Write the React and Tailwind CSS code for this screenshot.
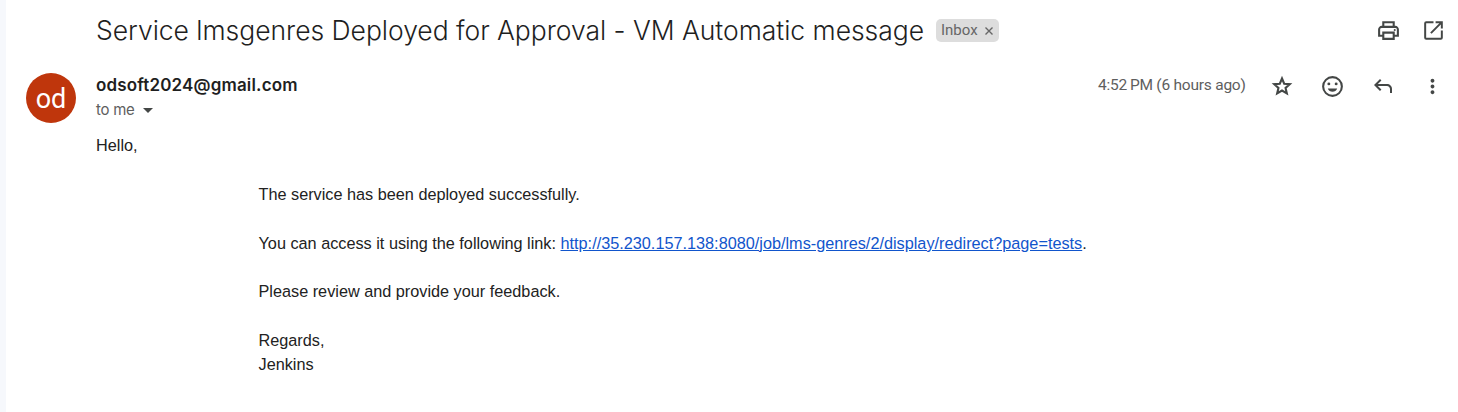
import { MdMoreVert } from "react-icons/md";

function PrintIcon() {
  return (
    <svg viewBox="0 0 24 24" className="size-[25px]" fill="none" stroke="currentColor" strokeWidth="2">
      <path d="M7 8V4h10v4" />
      <path d="M7 17H3v-6a2.500 2.500 0 0 1 2.500-2.500h13A2.500 2.500 0 0 1 21 11v6h-4" />
      <path d="M7 14h10v6H7z" />
      <circle cx="18" cy="11.500" r="1" fill="currentColor" stroke="none" />
    </svg>
  );
}

function NewWindowIcon() {
  return (
    <svg viewBox="0 0 24 24" className="size-[25px]" fill="none" stroke="currentColor" strokeWidth="1.900">
      <path d="M12 4H5a1 1 0 0 0-1 1v14a1 1 0 0 0 1 1h14a1 1 0 0 0 1-1v-7" />
      <path d="M14 4h6v6M20 4L9.500 14.500" />
    </svg>
  );
}

function StarIcon() {
  return (
    <svg viewBox="0 0 24 24" className="size-[24px]" fill="none" stroke="currentColor" strokeWidth="2.100">
      <path d="M12 4.500l2.200 5.200 5.600.5-4.250 3.700 1.280 5.500L12 16.500l-4.830 2.900 1.280-5.500L4.200 10.200l5.600-.5z" />
    </svg>
  );
}

function SmileIcon() {
  return (
    <svg viewBox="0 0 24 24" className="size-[25px]" fill="none" stroke="currentColor" strokeWidth="2">
      <circle cx="12" cy="12" r="9" />
      <circle cx="8.500" cy="9.500" r="1.400" fill="currentColor" stroke="none" />
      <circle cx="15.500" cy="9.500" r="1.400" fill="currentColor" stroke="none" />
      <path d="M7.500 13.800h9c-.8 2-2.500 3.200-4.500 3.200s-3.700-1.200-4.500-3.200z" fill="currentColor" stroke="none" />
    </svg>
  );
}

function ReplyIcon() {
  return (
    <svg viewBox="0 0 24 24" className="ml-px size-[24px]" fill="currentColor">
      <path d="M19 19v-4c0-.83-.29-1.540-.875-2.125S16.830 12 16 12H6.825l3.600 3.600L9 17l-6-6 6-6 1.425 1.400-3.600 3.600H16c1.383 0 2.563.488 3.538 1.463S21 13.617 21 15v4h-2z" />
    </svg>
  );
}

function IconButton({ label, children }) {
  return (
    <button aria-label={label} className="flex size-[26px] items-center justify-center">
      {children}
    </button>
  );
}

export default function App() {
  return (
    <div className="flex h-[412px] w-[1458px] overflow-hidden bg-[#f6f8fc] pl-1.5 font-['Liberation_Sans',sans-serif] text-[#222222]">
      <main className="flex flex-1 flex-col bg-white pl-5">
        <header className="flex h-[61px] items-center pl-[70px]">
          <h1 className="w-[840px] pb-0.5 whitespace-nowrap font-['Inter',sans-serif] text-[26.5px] leading-9 font-[350] tracking-[-0.03px] text-[#1f1f1f]">
            Service lmsgenres Deployed for Approval - VM Automatic message
          </h1>
          <span className="flex h-[23px] w-[63px] items-center rounded-[5px] bg-[#dddddd] pl-[5px] font-['Roboto',sans-serif] text-[15px] text-[#666666]">
            Inbox
            <svg viewBox="0 0 8 8" className="ml-[7px] size-2" stroke="currentColor" strokeWidth="1.400">
              <path d="M.5.5l7 7M7.500.5l-7 7" />
            </svg>
          </span>
          <div className="ml-auto flex gap-[19px] pr-3 text-[#444746]">
            <IconButton label="Print all"><PrintIcon /></IconButton>
            <IconButton label="In new window"><NewWindowIcon /></IconButton>
          </div>
        </header>

        <section className="flex pt-3">
          <div className="flex size-[50px] items-center justify-center rounded-full bg-[#bf360c] pt-0.5 font-['Roboto',sans-serif] text-[27px] font-[450] text-white">
            od
          </div>
          <div className="ml-5 font-['Inter',sans-serif]">
            <p className="h-[25px] whitespace-nowrap text-[17px] leading-6 font-semibold tracking-[0.15px] text-[#1f1f1f]">odsoft2024@gmail.com</p>
            <p className="flex h-6 items-center text-[15px] tracking-[-0.25px] text-[#5e5e5e]">
              to me
              <svg viewBox="0 0 10 5" className="ml-2 h-[5px] w-[10px]" fill="#444746"><path d="M0 0h10L5 5z" /></svg>
            </p>
          </div>
          <div className="ml-auto flex h-[26px] items-center pr-[13px] text-[#5e5e5e]">
            <time className="w-[171px] whitespace-nowrap font-['Roboto',sans-serif] text-[15.5px] tracking-[-0.23px]">4:52&#8201;PM (6 hours ago)</time>
            <div className="flex gap-6 text-[#444746]">
              <IconButton label="Star"><StarIcon /></IconButton>
              <IconButton label="Add reaction"><SmileIcon /></IconButton>
              <IconButton label="Reply"><ReplyIcon /></IconButton>
              <IconButton label="More"><MdMoreVert className="size-[23px]" /></IconButton>
            </div>
          </div>
        </section>

        <article className="pt-[10px] pl-[70px] text-[16.25px] leading-[24.375px]">
          <p>Hello,</p>
          <div className="mt-[24.375px] flex flex-col gap-[24.375px] pl-[162.500px]">
            <p>The service has been deployed successfully.</p>
            <p>
              You can access it using the following link:{" "}
              <a href="#" className="text-[#1155cc] underline">http://35.230.157.138:8080/job/lms-genres/2/display/redirect?page=tests</a>.
            </p>
            <p>Please review and provide your feedback.</p>
            <p>Regards,<br />Jenkins</p>
          </div>
        </article>
      </main>
    </div>
  );
}
